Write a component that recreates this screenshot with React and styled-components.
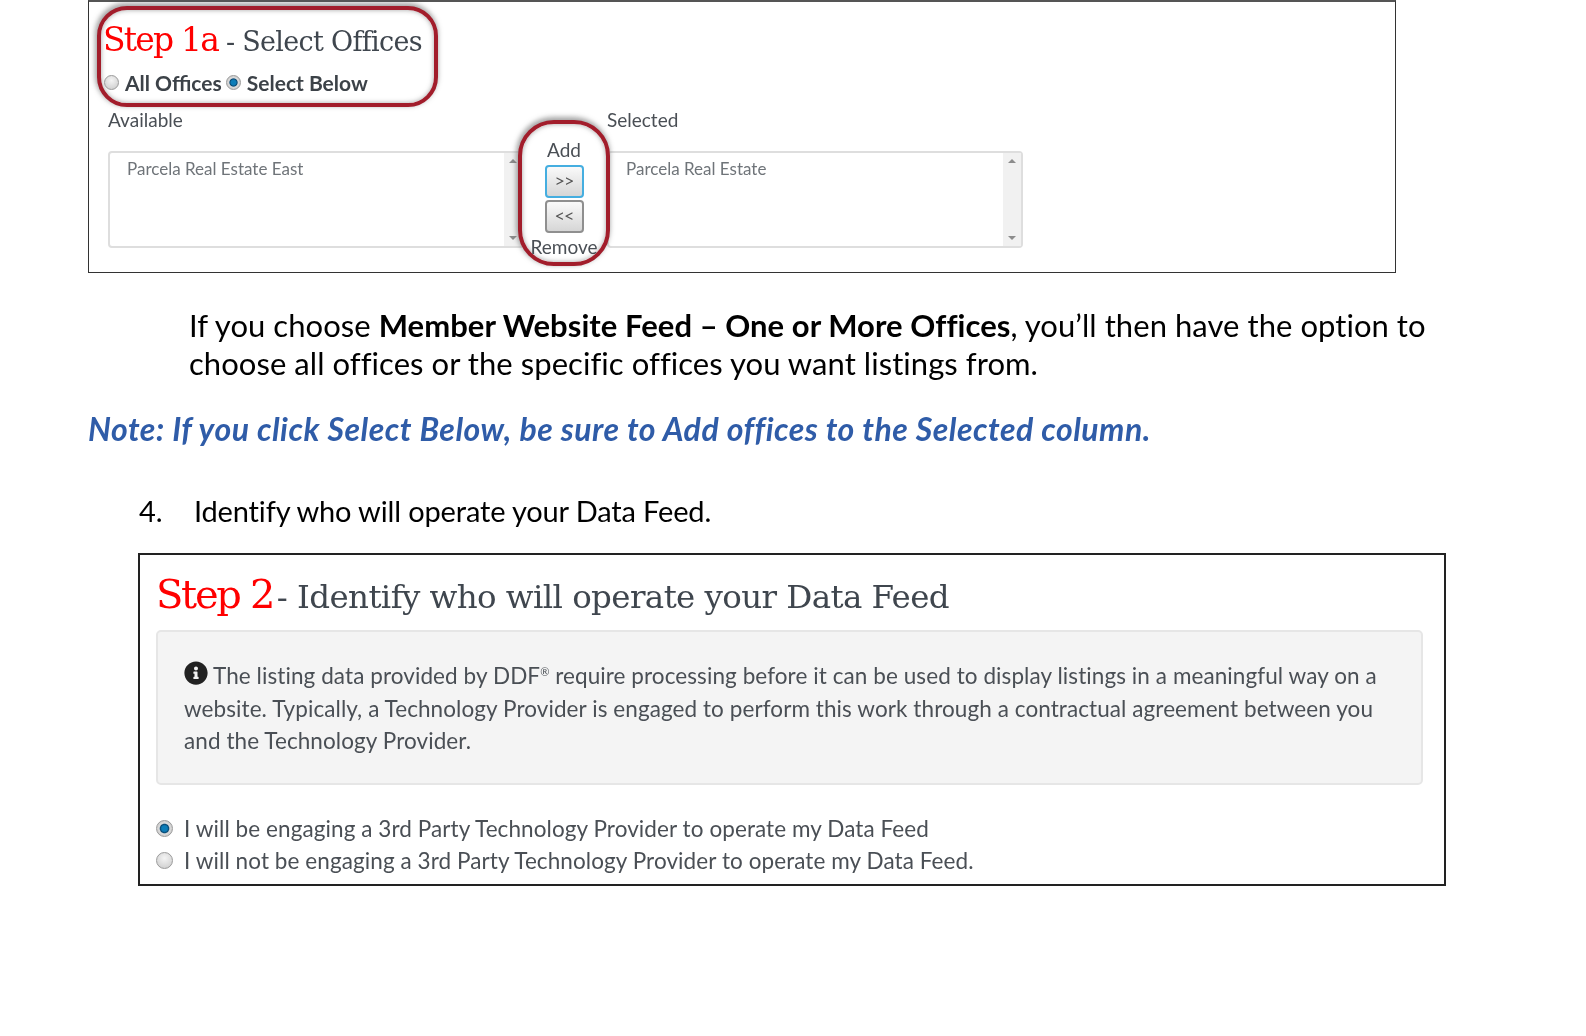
import React from "react";
import styled, { createGlobalStyle } from "styled-components";
import { FaInfoCircle } from "react-icons/fa";

const GlobalStyle = createGlobalStyle`
  html, body {
    margin: 0;
    padding: 0;
    background: #fff;
  }
`;

const Page = styled.div`
  width: 1586px;
  height: 1036px;
  overflow: hidden;
  display: flex;
  flex-direction: column;
  align-items: flex-start;
  padding-left: 88px;
  box-sizing: border-box;
  font-family: "Lato", "Liberation Sans", sans-serif;
  filter: blur(0.35px);
`;

const TopFrame = styled.div`
  width: 1308px;
  height: 273px;
  box-sizing: border-box;
  border: 1px solid #333;
  border-top: 2px solid #555;
  padding: 4px 0 0 8px;
`;

const Highlight = styled.div`
  box-sizing: border-box;
  border: 4px solid #a21d2b;
  background: #fff;
  box-shadow: -1px -2px 5px 1px rgba(90, 90, 90, 0.55), inset 0 0 5px rgba(90, 90, 90, 0.55);
`;

const StepBox = styled(Highlight)`
  width: 341px;
  height: 101px;
  border-radius: 30px;
  padding: 7px 0 0 2px;
`;

const SerifTitle = styled.div`
  font-family: "DejaVu Serif", "Liberation Serif", serif;
  color: #3f464e;
  white-space: nowrap;
  font-size: ${({ $size }) => $size}px;
  letter-spacing: ${({ $spacing }) => $spacing}px;
  line-height: ${({ $height }) => $height}px;
`;

const StepWord = styled.span`
  color: #ff0000;
  font-size: ${({ $size }) => $size}px;
  letter-spacing: ${({ $spacing }) => $spacing}px;
  margin-right: ${({ $pull = 0 }) => $pull}px;
`;

const RadioRow = styled.div`
  display: flex;
  align-items: center;
  margin-top: 5px;
  margin-left: 1px;
  color: #3c4248;
  font-size: 21px;
  font-weight: 700;
  white-space: nowrap;
`;

const Radio = styled.span`
  flex: none;
  width: ${({ $size }) => $size}px;
  height: ${({ $size }) => $size}px;
  border-radius: 50%;
  box-sizing: border-box;
  border: 1px solid #9a9a9a;
  background: ${({ $on }) =>
    $on
      ? "radial-gradient(circle, #0d7db8 0 26%, #0a4a74 40%, #dcdcdc 50%, #bdbdbd 100%)"
      : "radial-gradient(circle at 50% 35%, #f4f4f4, #c9c9c9)"};
  margin-left: ${({ $left = 0 }) => $left}px;
  margin-right: ${({ $gap }) => $gap}px;
`;

const PickerRow = styled.div`
  display: flex;
  align-items: flex-start;
  margin-left: 11px;
`;

const Column = styled.div`
  width: 414px;
  flex: none;
`;

const ColumnLabel = styled.div`
  color: #4a4f55;
  font-size: 19px;
  line-height: 24px;
  margin-top: 1px;
  height: 43px;
`;

const ListBox = styled.div`
  width: 416px;
  height: 97px;
  box-sizing: border-box;
  border: 2px solid #dedede;
  border-radius: 4px;
  display: flex;
  justify-content: space-between;
  background: #fff;
`;

const ListItem = styled.div`
  color: #6f7479;
  font-size: 17px;
  line-height: 22px;
  padding: 5px 0 0 17px;
`;

const ScrollTrack = styled.div`
  width: 18px;
  flex: none;
  background: #f1f1f1;
  display: flex;
  flex-direction: column;
  justify-content: space-between;
  align-items: center;
  padding: 6px 0;
  box-sizing: border-box;
`;

const Arrow = styled.span`
  width: 0;
  height: 0;
  border-left: 4px solid transparent;
  border-right: 4px solid transparent;
  ${({ $down }) =>
    $down ? "border-top: 4px solid #8c8c8c;" : "border-bottom: 4px solid #8c8c8c;"}
`;

const MoveBox = styled(Highlight)`
  flex: none;
  width: 92px;
  height: 146px;
  margin: 13px -3px 0 -4px;
  border-radius: 36px;
  position: relative;
  z-index: 1;
  display: flex;
  flex-direction: column;
  align-items: center;
  padding-top: 14px;
  color: #4a4f55;
  font-size: 19px;
  line-height: 24px;
`;

const MoveButton = styled.div`
  width: 39px;
  height: 33px;
  margin-top: ${({ $top }) => $top}px;
  box-sizing: border-box;
  border: 2px solid ${({ $active }) => ($active ? "#45aee0" : "#8f8f8f")};
  border-radius: 4px;
  background: linear-gradient(#fafafa, #d6d6d6);
  color: #555;
  font-size: 18px;
  letter-spacing: -1px;
  line-height: 27px;
  text-align: center;
`;

const RemoveLabel = styled.div`
  margin-top: 2px;
  white-space: nowrap;
`;

const Lead = styled.p`
  margin: 33px 0 0 101px;
  font-size: 31px;
  line-height: 38px;
  color: #000;
  width: 1300px;
  letter-spacing: 0.05px;
`;

const Note = styled.p`
  margin: 27px 0 0;
  font-size: 32px;
  line-height: 40px;
  font-weight: 700;
  font-style: italic;
  color: #2f5ca8;
  white-space: nowrap;
  letter-spacing: 0.5px;
`;

const StepItem = styled.div`
  display: flex;
  margin: 43px 0 0 51px;
  font-size: 29px;
  line-height: 38px;
  color: #000;
  letter-spacing: -0.15px;
`;

const StepNumber = styled.span`
  width: 55px;
`;

const BottomFrame = styled.div`
  width: 1308px;
  height: 333px;
  margin: 23px 0 0 50px;
  box-sizing: border-box;
  border: 2px solid #222;
  padding: 13px 21px 0 16px;
`;

const InfoPanel = styled.div`
  margin-top: 7px;
  height: 155px;
  box-sizing: border-box;
  border: 2px solid #e6e6e6;
  border-radius: 5px;
  background: #f4f4f4;
  padding: 28px 26px 0 26px;
  color: #4a4f55;
  font-size: 22.5px;
  line-height: 32.5px;
  letter-spacing: 0.08px;
`;

const InfoIcon = styled(FaInfoCircle)`
  color: #222;
  font-size: 24px;
  vertical-align: -1px;
  margin-right: 5px;
`;

const RegMark = styled.sup`
  font-size: 11px;
  line-height: 0;
`;

const OptionList = styled.div`
  margin-top: 27px;
  display: flex;
  flex-direction: column;
`;

const OptionRow = styled.div`
  display: flex;
  align-items: center;
  height: 32.5px;
  color: #4a4f55;
  font-size: 22.5px;
  letter-spacing: 0.08px;
  white-space: nowrap;
`;

export default function App() {
  return (
    <Page>
      <GlobalStyle />
      <TopFrame>
        <StepBox>
          <SerifTitle $size={27} $spacing={-0.7} $height={46}>
            <StepWord $size={33} $spacing={-1.8}>Step 1a</StepWord> - Select Offices
          </SerifTitle>
          <RadioRow>
            <Radio $size={15} $gap={6} />
            All Offices
            <Radio $on $size={15} $gap={6} $left={4} />
            Select Below
          </RadioRow>
        </StepBox>
        <PickerRow>
          <Column>
            <ColumnLabel>Available</ColumnLabel>
            <ListBox>
              <ListItem>Parcela Real Estate East</ListItem>
              <ScrollTrack>
                <Arrow />
                <Arrow $down />
              </ScrollTrack>
            </ListBox>
          </Column>
          <MoveBox>
            Add
            <MoveButton $active $top={3}>&gt;&gt;</MoveButton>
            <MoveButton $top={2}>&lt;&lt;</MoveButton>
            <RemoveLabel>Remove</RemoveLabel>
          </MoveBox>
          <Column>
            <ColumnLabel>Selected</ColumnLabel>
            <ListBox>
              <ListItem>Parcela Real Estate</ListItem>
              <ScrollTrack>
                <Arrow />
                <Arrow $down />
              </ScrollTrack>
            </ListBox>
          </Column>
        </PickerRow>
      </TopFrame>

      <Lead>
        If you choose <b>Member Website Feed – One or More Offices</b>, you’ll then have the option to
        choose all offices or the specific offices you want listings from.
      </Lead>
      <Note>Note: If you click Select Below, be sure to Add offices to the Selected column.</Note>
      <StepItem>
        <StepNumber>4.</StepNumber>
        Identify who will operate your Data Feed.
      </StepItem>

      <BottomFrame>
        <SerifTitle $size={32.5} $spacing={-0.6} $height={52}>
          <StepWord $size={40} $spacing={-2.3} $pull={-6}>Step 2</StepWord> - Identify who will operate your Data Feed
        </SerifTitle>
        <InfoPanel>
          <InfoIcon />
          The listing data provided by DDF<RegMark>®</RegMark> require processing before it can be used to
          display listings in a meaningful way on a website. Typically, a Technology Provider is engaged
          to perform this work through a contractual agreement between you and the Technology Provider.
        </InfoPanel>
        <OptionList>
          <OptionRow>
            <Radio $on $size={17} $gap={11} />
            I will be engaging a 3rd Party Technology Provider to operate my Data Feed
          </OptionRow>
          <OptionRow>
            <Radio $size={17} $gap={11} />
            I will not be engaging a 3rd Party Technology Provider to operate my Data Feed.
          </OptionRow>
        </OptionList>
      </BottomFrame>
    </Page>
  );
}
